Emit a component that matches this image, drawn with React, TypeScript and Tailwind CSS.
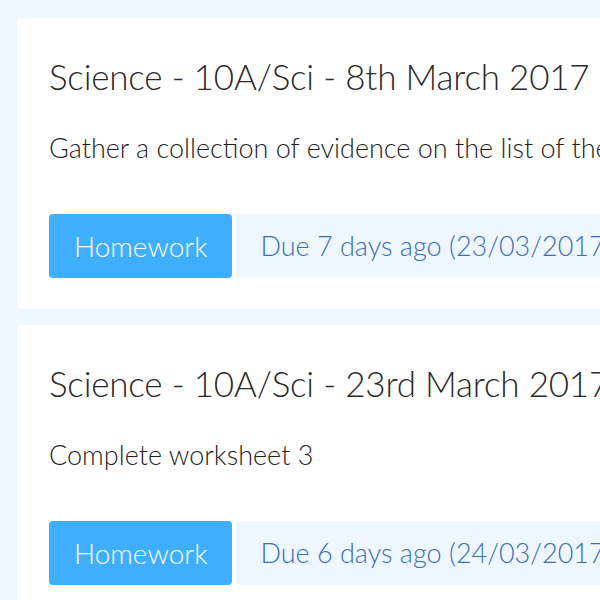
import React from "react";

const items = [
  {
    title: "Science - 10A/Sci - 8th March 2017",
    desc: "Gather a collection of evidence on the list of the topics discussed in class and bring them along next lesson",
    due: "Due 7 days ago (23/03/2017)",
  },
  {
    title: "Science - 10A/Sci - 23rd March 2017",
    desc: "Complete worksheet 3",
    due: "Due 6 days ago (24/03/2017)",
  },
];

export default function App() {
  return (
    <div className="w-[600px] h-[600px] overflow-hidden bg-[#eef6fe] font-['Lato','Open_Sans',sans-serif]">
      <div className="w-[1100px] pl-[17px] pt-[18px] flex flex-col gap-4">
        {items.map((it, i) => (
          <div key={i} className="bg-white rounded-[4px] px-8 pt-[38px] h-[291px] flex flex-col">
            <h2 className="text-[35px] leading-[40px] tracking-[-0.2px] font-light text-[#2a2a2a] whitespace-nowrap">{it.title}</h2>
            <p className="mt-[36px] text-[27px] leading-[32px] font-light text-[#1f1f1f] whitespace-nowrap">{it.desc}</p>
            <div className="mt-[50px] flex gap-1">
              <span className="h-16 px-[25px] flex items-center rounded-[4px] bg-[#3eaefd] text-white text-[28px] font-light">Homework</span>
              <span className="h-16 px-6 flex items-center rounded-[4px] bg-[#eef6fe] text-[#3b6fb8] text-[27px] font-light whitespace-nowrap w-[600px]">{it.due}</span>
            </div>
          </div>
        ))}
      </div>
    </div>
  );
}
